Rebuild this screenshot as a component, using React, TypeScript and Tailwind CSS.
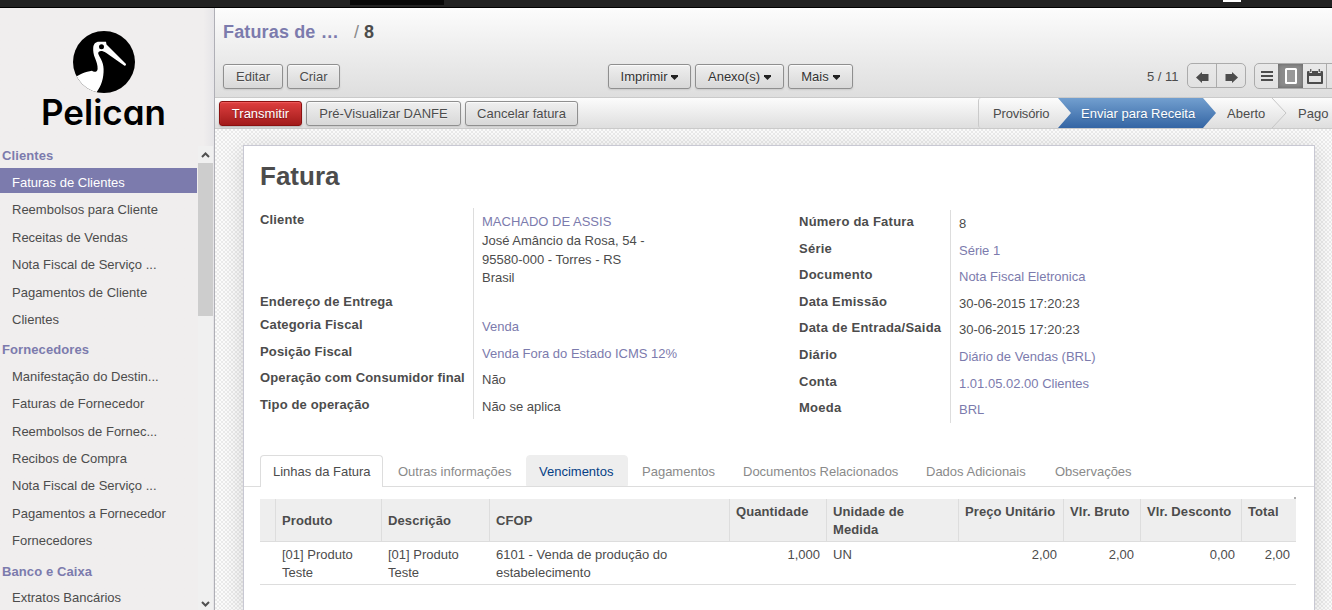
import React from "react";

const btn =
  "flex h-[25px] shrink-0 items-center justify-center rounded-[3px] border border-[#8f8f8f] bg-gradient-to-b from-[#efefef] to-[#d8d8d8] pt-px text-[13px] text-[#4c4c4c] shadow-[0_1px_2px_rgba(0,0,0,0.1),inset_0_1px_1px_rgba(255,255,255,0.8)] [text-shadow:0_1px_1px_rgba(255,255,255,0.5)]";

type Section = { title: string; items: string[] };

const sections: Section[] = [
  {
    title: "Clientes",
    items: [
      "Faturas de Clientes",
      "Reembolsos para Cliente",
      "Receitas de Vendas",
      "Nota Fiscal de Serviço ...",
      "Pagamentos de Cliente",
      "Clientes",
    ],
  },
  {
    title: "Fornecedores",
    items: [
      "Manifestação do Destin...",
      "Faturas de Fornecedor",
      "Reembolsos de Fornec...",
      "Recibos de Compra",
      "Nota Fiscal de Serviço ...",
      "Pagamentos a Fornecedor",
      "Fornecedores",
    ],
  },
  { title: "Banco e Caixa", items: ["Extratos Bancários"] },
];

function Logo() {
  return (
    <div className="flex h-[138px] shrink-0 flex-col items-center pt-[23px] pr-[7px]">
      <svg className="size-[62px] shrink-0" viewBox="0 0 62 62">
        <defs>
          <clipPath id="disc">
            <circle cx="31" cy="31" r="31" />
          </clipPath>
        </defs>
        <circle cx="31" cy="31" r="31" fill="#000" />
        <g clipPath="url(#disc)">
          <path
            fill="#fff"
            d="M0 48 C5 44 13 40.500 19 39.800 C20.500 41.500 24.500 41.300 24.600 38 C24.800 34 23.500 31 22 27 C20.500 23.500 20 20 20.200 17 C20.500 13 22.500 10.800 26 10.800 L33 10.800 L33.500 13.500 L53 33 Q53.300 35 51.500 34.800 L33 21.700 C29 19 25 19.500 25.200 22.500 C26 26 30.500 30 30.600 38 C30.800 47 28.500 55 23 62 L0 62 Z"
          />
          <circle cx="28.500" cy="15.700" r="2.500" fill="#000" />
        </g>
      </svg>
      <div className="mt-[-3px] font-['Inter',sans-serif] text-[35px] leading-[44px] font-semibold text-black [font-feature-settings:'cv11']">
        Pelican
      </div>
    </div>
  );
}

function Sidebar() {
  return (
    <aside className="flex w-[215px] shrink-0 flex-col overflow-hidden border-r border-[#afafb6] bg-gradient-to-r from-[#f0eeee] from-95% to-[#e6e5e8]">
      <Logo />
      <div className="flex min-h-0 flex-1">
        <nav className="w-[197px] shrink-0 overflow-hidden">
          {sections.map((s, i) => (
            <div key={s.title} className={i === 0 ? "" : "pt-2"}>
              <div
                className={`${i === 0 ? "h-[22px]" : "h-[21.5px]"} pl-[2px] text-[13px] leading-[19px] font-bold tracking-[0.1px] text-[#7c7bad]`}
              >
                {s.title}
              </div>
              {s.items.map((t, j) => (
                <div key={t} className="h-[27.4px]">
                  <div
                    className={
                      i === 0 && j === 0
                        ? "h-[25px] bg-[#7c7bad] pl-3 text-[13px] leading-[29px] text-white"
                        : "h-[25px] pl-3 text-[13px] leading-[29px] text-[#4c4c4c]"
                    }
                  >
                    {t}
                  </div>
                </div>
              ))}
            </div>
          ))}
        </nav>
        <div className="ml-px flex w-[15px] shrink-0 flex-col items-center bg-[#f0f0f0]">
          <svg className="h-[17px] w-[15px] shrink-0" viewBox="0 0 15 17">
            <path d="M4 11 L7.500 7.500 L11 11" fill="none" stroke="#505050" strokeWidth="2" />
          </svg>
          <div className="h-[153px] w-full bg-[#cdcdcd]" />
          <div className="flex-1" />
          <svg className="h-[15px] w-[15px] shrink-0" viewBox="0 0 15 15">
            <path d="M4 7 L7.500 10.500 L11 7" fill="none" stroke="#505050" strokeWidth="2" />
          </svg>
        </div>
      </div>
    </aside>
  );
}

function Caret() {
  return (
    <svg className="ml-[4px] h-[5px] w-[7px]" viewBox="0 0 7 5">
      <path d="M0 0 H7 V1.500 L3.500 5 L0 1.500 Z" fill="#222" />
    </svg>
  );
}

function Arrow({ flip }: { flip?: boolean }) {
  return (
    <svg className={flip ? "h-[11px] w-[13px] rotate-180" : "h-[11px] w-[13px]"} viewBox="0 0 13 11">
      <path d="M0 5.500 L6 0 V2 H12.500 V9 H6 V11 Z" fill="#4c4c4c" />
    </svg>
  );
}

function Header() {
  return (
    <header className="flex h-[90px] shrink-0 flex-col border-b border-[#cacaca] bg-gradient-to-b from-[#fcfcfc] to-[#dedede]">
      <div className="flex h-[56px] shrink-0 pl-2 text-[18px] leading-[48px] font-bold">
        <span className="w-[131px] tracking-[0.15px] text-[#7c7bad]">Faturas de …</span>
        <span className="w-[10px] font-normal text-[#8a8a8a]">/</span>
        <span className="text-[#4c4c4c]">8</span>
      </div>
      <div className="flex pl-2">
        <button className={`${btn} w-[60px]`}>Editar</button>
        <button className={`${btn} ml-1 w-[53px]`}>Criar</button>
        <button className={`${btn} ml-[268px] w-[83px] text-[#333333]`}>Imprimir<Caret /></button>
        <button className={`${btn} ml-1 w-[89px] text-[#333333]`}>Anexo(s)<Caret /></button>
        <button className={`${btn} ml-1 w-[65px] text-[#333333]`}>Mais<Caret /></button>
        <span className="ml-[294px] w-[40px] shrink-0 text-[13px] leading-[26px] text-[#4c4c4c]">5 / 11</span>
        <div className="mt-[-1px] flex h-[25px] w-[59px] shrink-0 rounded-[5px] border border-[#ababab]">
          <div className="flex w-[29px] items-center justify-center border-r border-[#ababab] pt-[3px]">
            <Arrow />
          </div>
          <div className="flex flex-1 items-center justify-center pt-[3px]">
            <Arrow flip />
          </div>
        </div>
        <div className="mt-[-1px] ml-2 flex h-[26px] w-[98px] shrink-0 overflow-hidden rounded-[5px] border border-[#ababab]">
          <div className="flex w-[23px] items-center justify-center">
            <svg className="h-[10px] w-[12px]" viewBox="0 0 12 10">
              <path d="M0 1H12M0 5H12M0 9H12" stroke="#4c4c4c" strokeWidth="2" />
            </svg>
          </div>
          <div className="flex w-[25px] items-center justify-center bg-[#8c8c8c] shadow-[inset_0_0_4px_rgba(0,0,0,0.3)]">
            <svg className="h-[16px] w-[12px]" viewBox="0 0 12 16">
              <rect x="1" y="1" width="10" height="14" rx="0.500" fill="#999" stroke="#fff" strokeWidth="2" />
            </svg>
          </div>
          <div className="flex w-[24px] items-center justify-center border-r border-[#ababab]">
            <svg className="h-[15px] w-[16px]" viewBox="0 0 16 15">
              <path
                fill="#4c4c4c"
                fillRule="evenodd"
                d="M1 2 H2.500 V4 H5 V2 H11 V4 H13.500 V2 H15 Q16 2 16 3 V14 Q16 15 15 15 H1 Q0 15 0 14 V3 Q0 2 1 2 Z M2 7 V13 H14 V7 Z"
              />
              <path d="M3.750 0V3M12.250 0V3" stroke="#4c4c4c" strokeWidth="1.200" />
            </svg>
          </div>
        </div>
      </div>
    </header>
  );
}

function StatusBar() {
  return (
    <div className="flex h-[31px] shrink-0 border-b border-[#cacaca] bg-gradient-to-b from-[#fcfcfc] to-[#dedede] pl-1 text-[13px] text-[#4c4c4c]">
      <button className="mt-[3px] flex h-[25px] w-[83px] shrink-0 items-center justify-center rounded-[3px] border border-[#8a1010] bg-gradient-to-b from-[#df3f3f] to-[#a21a1a] pt-px text-white shadow-[0_1px_2px_rgba(0,0,0,0.2),inset_0_1px_1px_rgba(255,120,120,0.5)] [text-shadow:0_1px_1px_rgba(0,0,0,0.3)]">
        Transmitir
      </button>
      <button className={`${btn} mt-[3px] ml-1 w-[155px]`}>Pré-Visualizar DANFE</button>
      <button className={`${btn} mt-[3px] ml-1 w-[113px]`}>Cancelar fatura</button>
      <div className="ml-[400px] flex h-[30px] shrink-0 leading-[32px]">
        <div className="w-[79px] rounded-l-[3px] border-l border-[#cacaca] pl-[14px] tracking-[-0.15px]">Provisório</div>
        <div className="relative h-[30px] w-[159px] shrink-0 pl-[24px] text-white">
          <svg className="absolute inset-0 h-[30px] w-[159px]" viewBox="0 0 159 30">
            <defs>
              <linearGradient id="active" x1="0" y1="0" x2="0" y2="1">
                <stop offset="0" stopColor="#729fcf" />
                <stop offset="1" stopColor="#3465a4" />
              </linearGradient>
            </defs>
            <path d="M1 0 H146 L159 15 L146 30 H1 L14 15 Z" fill="url(#active)" />
          </svg>
          <span className="relative whitespace-nowrap [text-shadow:0_1px_1px_rgba(0,0,0,0.2)]">Enviar para Receita</span>
        </div>
        <div className="w-[55px] pl-[11px]">Aberto</div>
        <svg className="h-[30px] w-[16px] shrink-0" viewBox="0 0 16 30">
          <path d="M1 0 L15 15 L1 30" fill="none" stroke="#c6c6c6" />
        </svg>
        <div className="pl-[11px]">Pago</div>
      </div>
    </div>
  );
}

type Row = { label: string; value: string; link?: boolean; h: string; extra?: string[] };

const left: Row[] = [
  {
    label: "Cliente",
    value: "MACHADO DE ASSIS",
    link: true,
    h: "h-[82px]",
    extra: ["José Amâncio da Rosa, 54 -", "95580-000 - Torres - RS", "Brasil"],
  },
  { label: "Endereço de Entrega", value: "", h: "h-[23px]" },
  { label: "Categoria Fiscal", value: "Venda", link: true, h: "h-[27px]" },
  { label: "Posição Fiscal", value: "Venda Fora do Estado ICMS 12%", link: true, h: "h-[26px]" },
  { label: "Operação com Consumidor final", value: "Não", h: "h-[27px]" },
  { label: "Tipo de operação", value: "Não se aplica", h: "h-[26px]" },
];

const right: Row[] = [
  { label: "Número da Fatura", value: "8", h: "h-[27px]" },
  { label: "Série", value: "Série 1", link: true, h: "h-[26px]" },
  { label: "Documento", value: "Nota Fiscal Eletronica", link: true, h: "h-[27px]" },
  { label: "Data Emissão", value: "30-06-2015 17:20:23", h: "h-[26px]" },
  { label: "Data de Entrada/Saida", value: "30-06-2015 17:20:23", h: "h-[27px]" },
  { label: "Diário", value: "Diário de Vendas (BRL)", link: true, h: "h-[27px]" },
  { label: "Conta", value: "1.01.05.02.00 Clientes", link: true, h: "h-[26px]" },
  { label: "Moeda", value: "BRL", link: true, h: "h-[27px]" },
];

function Fields({ rows, labelClass }: { rows: Row[]; labelClass: string }) {
  return (
    <div>
      {rows.map((r) => (
        <div key={r.label} className={`flex ${r.h}`}>
          <div className={`${labelClass} shrink-0 leading-[24px] font-bold whitespace-nowrap`}>{r.label}</div>
          <div className="border-l border-[#dddddd] pl-2 whitespace-nowrap">
            <div className={r.link ? "leading-[28px] text-[#7c7bad]" : "leading-[28px]"}>{r.value}</div>
            {r.extra && (
              <div className="mt-[-4px] leading-[18.5px]">
                {r.extra.map((e) => (
                  <div key={e}>{e}</div>
                ))}
              </div>
            )}
          </div>
        </div>
      ))}
    </div>
  );
}

const tabs = [
  { t: "Linhas da Fatura", c: "w-[123px] mr-[2px] h-[32px] rounded-t-[4px] border border-b-0 border-[#dddddd] bg-white text-[#4c4c4c]" },
  { t: "Outras informações", c: "w-[139px] mr-[2px] border border-transparent text-[#8a8a8a]" },
  { t: "Vencimentos", c: "w-[102px] mr-px h-[31px] rounded-t-[4px] border border-[#eeeeee] bg-[#eeeeee] text-[#064085]" },
  { t: "Pagamentos", c: "w-[101px] border border-transparent text-[#8a8a8a]" },
  { t: "Documentos Relacionados", c: "w-[183px] border border-transparent text-[#8a8a8a]" },
  { t: "Dados Adicionais", c: "w-[129px] border border-transparent text-[#8a8a8a]" },
  { t: "Observações", c: "w-[102px] border border-transparent text-[#8a8a8a]" },
];

const cols = [
  { t: "Produto", v: "[01] Produto Teste", w: "w-[106px]", mid: true, num: false },
  { t: "Descrição", v: "[01] Produto Teste", w: "w-[108px]", mid: true, num: false },
  { t: "CFOP", v: "6101 - Venda de produção do estabelecimento", w: "w-[240px]", mid: true, num: false },
  { t: "Quantidade", v: "1,000", w: "w-[97px]", mid: false, num: true },
  { t: "Unidade de Medida", v: "UN", w: "w-[132px]", mid: false, num: false },
  { t: "Preço Unitário", v: "2,00", w: "w-[105px]", mid: false, num: true },
  { t: "Vlr. Bruto", v: "2,00", w: "w-[77px]", mid: false, num: true },
  { t: "Vlr. Desconto", v: "0,00", w: "w-[101px]", mid: false, num: true },
  { t: "Total", v: "2,00", w: "w-[55px]", mid: false, num: true },
];

function Sheet() {
  return (
    <div className="mt-4 ml-7 flex w-[1072px] flex-col border border-b-0 border-[#c8c8d3] bg-white text-[13px] text-[#4c4c4c] shadow-[0_4px_20px_rgba(0,0,0,0.15)]">
      <h1 className="h-[62px] shrink-0 pl-4 text-[26px] leading-[60px] font-bold">Fatura</h1>
      <div className="flex h-[247px] shrink-0 pl-4">
        <div className="w-[539px] shrink-0">
          <Fields rows={left} labelClass="w-[213px] tracking-[0.14px]" />
        </div>
        <div className="pt-[2px]">
          <Fields rows={right} labelClass="w-[151px] tracking-[0.24px]" />
        </div>
      </div>
      <div className="flex h-[32px] shrink-0 border-b border-[#dddddd] pl-4">
        {tabs.map((x) => (
          <div key={x.t} className={`shrink-0 pl-[12px] leading-[31px] whitespace-nowrap ${x.c}`}>
            {x.t}
          </div>
        ))}
      </div>
      <div className="flex h-3 w-[1052px] shrink-0 justify-end pt-[10px]">
        <div className="size-[2px] bg-[#b0b0b0]" />
      </div>
      <div className="ml-4 flex h-[43px] w-[1036px] shrink-0 border-b border-[#dddddd] bg-[#eeeeee] pl-[15px] leading-[18px] font-bold tracking-[0.1px]">
        {cols.map((c) => (
          <div
            key={c.t}
            className={`${c.w} shrink-0 border-l border-[#dddddd] pl-[6px] ${c.mid ? "pt-[13px]" : "pt-[4px]"} ${c.t === "Unidade de Medida" ? "pr-[30px]" : ""}`}
          >
            {c.t}
          </div>
        ))}
      </div>
      <div className="ml-4 flex h-[43px] w-[1036px] shrink-0 border-b border-[#dddddd] pt-[4px] pl-[15px] leading-[18px]">
        {cols.map((c) => (
          <div key={c.t} className={`${c.w} shrink-0 pl-[7px] ${c.num ? "pr-[6px] text-right" : "pr-[18px]"}`}>
            {c.v}
          </div>
        ))}
      </div>
    </div>
  );
}

export default function App() {
  return (
    <div className="flex h-[610px] w-[1332px] flex-col overflow-hidden bg-white font-['Liberation_Sans',Arial,sans-serif]">
      <div className="flex h-2 shrink-0 border-b border-black bg-[#222222]">
        <div className="ml-[350px] h-[5px] w-[94px] bg-[#080808]" />
        <div className="ml-[779px] h-[2px] w-[18px] bg-white" />
      </div>
      <div className="flex min-h-0 flex-1">
        <Sidebar />
        <main className="flex min-w-0 flex-1 flex-col overflow-hidden">
          <Header />
          <StatusBar />
          <div className="flex min-h-0 flex-1 overflow-hidden bg-[conic-gradient(#eaeaea_25%,#fbfbfb_0_50%,#eaeaea_0_75%,#fbfbfb_0)] bg-[length:4px_4px]">
            <Sheet />
          </div>
        </main>
      </div>
    </div>
  );
}
